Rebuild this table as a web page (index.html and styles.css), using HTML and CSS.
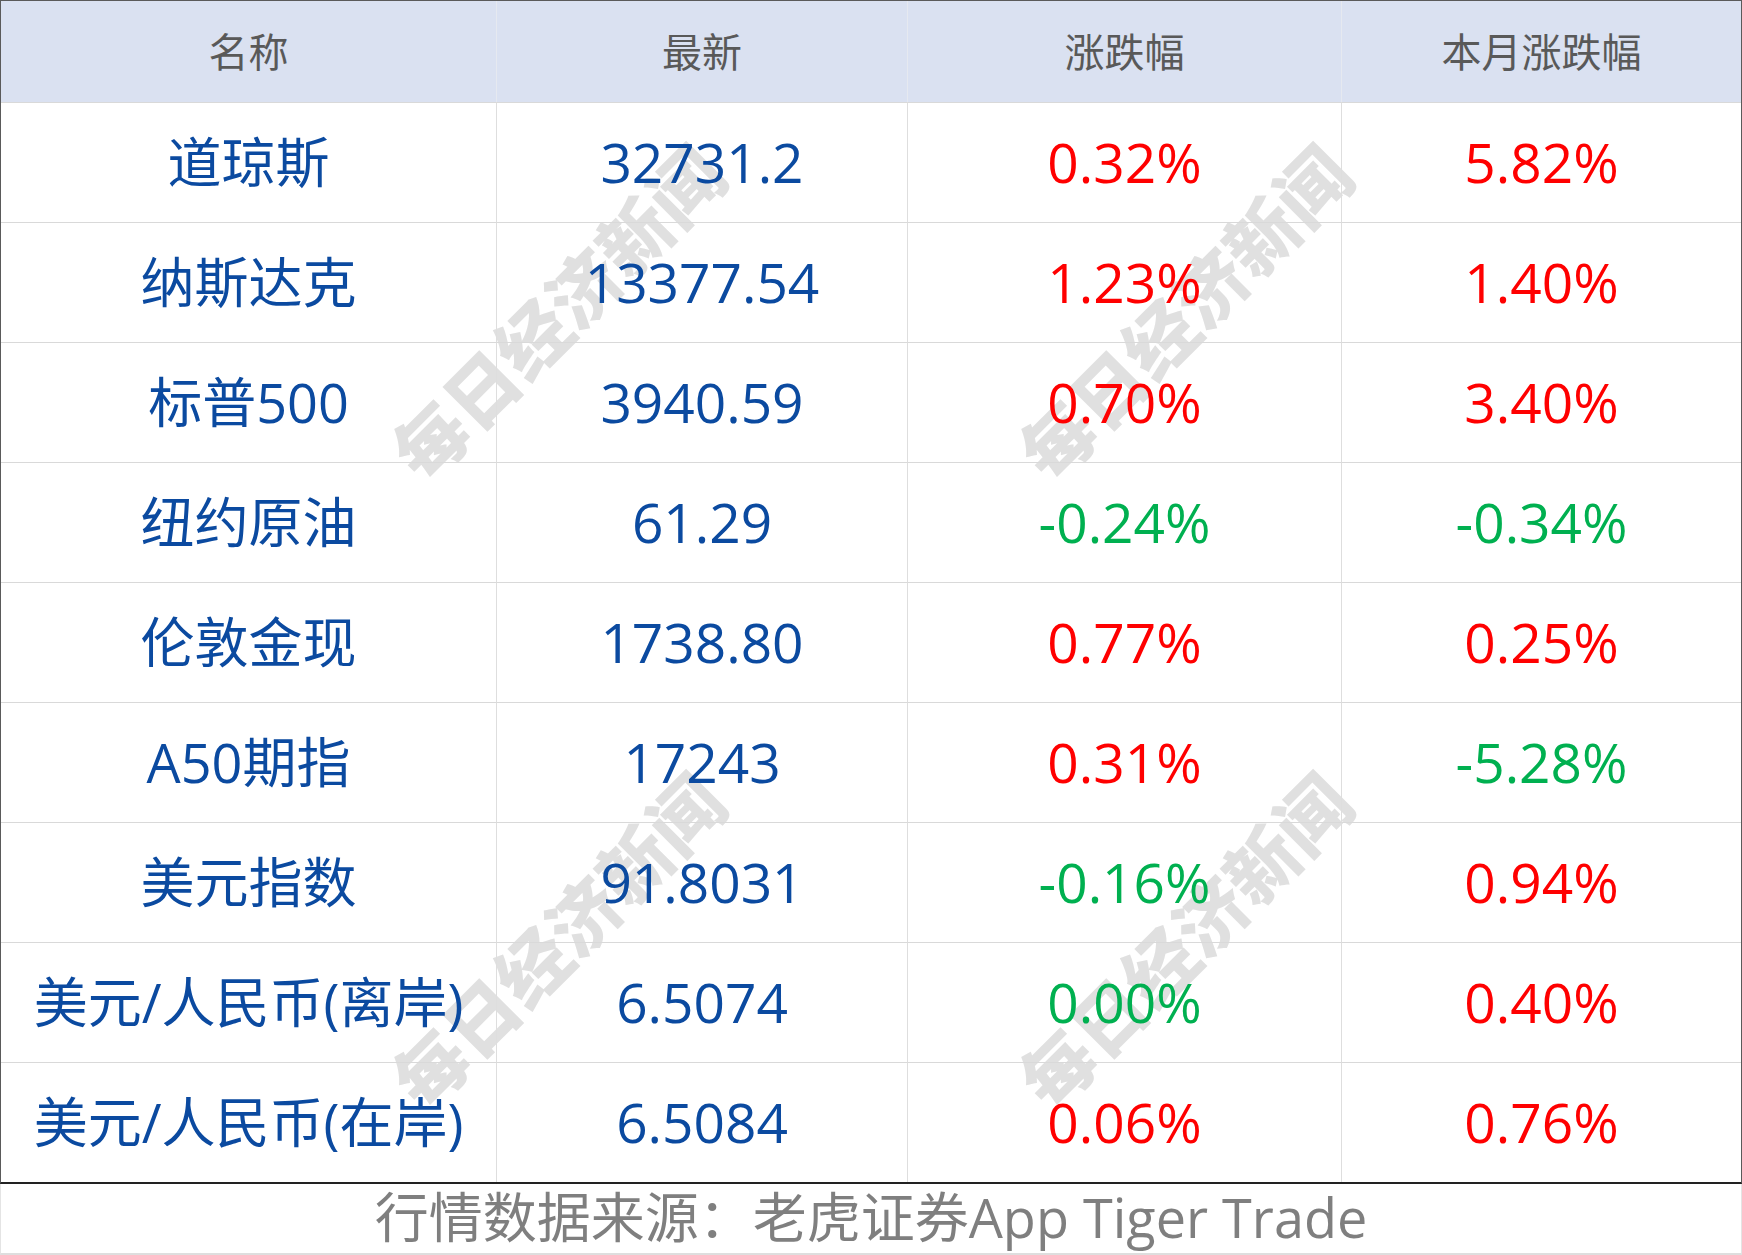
FILE: index.html
```html
<!DOCTYPE html>
<html lang="zh-CN">
<head>
<meta charset="utf-8">
<title>行情数据</title>
<link rel="stylesheet" href="styles.css">
</head>
<body>
<div class="sheet">
  <div class="marks">
    <span class="mark m1">每日经济新闻</span>
    <span class="mark m2">每日经济新闻</span>
    <span class="mark m3">每日经济新闻</span>
    <span class="mark m4">每日经济新闻</span>
  </div>
  <div class="grid">
    <div class="hd">名称</div><div class="hd">最新</div><div class="hd">涨跌幅</div><div class="hd">本月涨跌幅</div>

    <div class="c name">道琼斯</div><div class="c num">32731.2</div><div class="c up">0.32%</div><div class="c up">5.82%</div>
    <div class="c name">纳斯达克</div><div class="c num">13377.54</div><div class="c up">1.23%</div><div class="c up">1.40%</div>
    <div class="c name">标普500</div><div class="c num">3940.59</div><div class="c up">0.70%</div><div class="c up">3.40%</div>
    <div class="c name">纽约原油</div><div class="c num">61.29</div><div class="c down">-0.24%</div><div class="c down">-0.34%</div>
    <div class="c name">伦敦金现</div><div class="c num">1738.80</div><div class="c up">0.77%</div><div class="c up">0.25%</div>
    <div class="c name">A50期指</div><div class="c num">17243</div><div class="c up">0.31%</div><div class="c down">-5.28%</div>
    <div class="c name">美元指数</div><div class="c num">91.8031</div><div class="c down">-0.16%</div><div class="c up">0.94%</div>
    <div class="c name">美元/人民币(离岸)</div><div class="c num">6.5074</div><div class="c down">0.00%</div><div class="c up">0.40%</div>
    <div class="c name">美元/人民币(在岸)</div><div class="c num">6.5084</div><div class="c up">0.06%</div><div class="c up">0.76%</div>
  </div>
  <div class="foot"><span>行情数据来源：老虎证券App Tiger Trade</span></div>
</div>
</body>
</html>
```
FILE: styles.css
```css
html, body {
  margin: 0;
  padding: 0;
  background: #ffffff;
}
body {
  width: 1742px;
  height: 1255px;
  overflow: hidden;
  font-family: "Open Sans", "Noto Sans CJK SC", sans-serif;
}
.sheet {
  position: relative;
  width: 1742px;
}
.grid {
  position: relative;
  z-index: 1;
  display: grid;
  grid-template-columns: 495px 411px 434px 400px;
  grid-template-rows: 101px repeat(9, 120px);
  width: 1740px;
  border: 1px solid #5a5a5a;
  border-bottom: 2px solid #222222;
}
.hd {
  background: #dae1f1;
  color: #595959;
  font-size: 40px;
  line-height: 1;
  padding-bottom: 0;
  display: flex;
  align-items: center;
  justify-content: center;
  border-left: 1px solid #e6e9f0;
}
.hd:first-child { border-left: none; }
.c {
  display: flex;
  align-items: center;
  justify-content: center;
  font-size: 55px;
  line-height: 1;
  padding-bottom: 2px;
  border-top: 1px solid #d9d9d9;
  border-left: 1px solid #dedede;
  white-space: nowrap;
}
.name { border-left: none; color: #0b4aa0; font-size: 54px; }
.num { color: #0b4aa0; }
.up { color: #ff0000; }
.down { color: #00b050; }
.foot {
  height: 71px;
  display: flex;
  align-items: center;
  justify-content: center;
  border-left: 1px solid #e4e4e4;
  border-right: 1px solid #e4e4e4;
  border-bottom: 2px solid #dedede;
  color: #7f7f7f;
  font-size: 54px;
  line-height: 1;
  padding-bottom: 4px;
  box-sizing: border-box;
  white-space: nowrap;
}
.marks {
  position: absolute;
  inset: 0;
  z-index: 0;
  pointer-events: none;
}
.mark {
  position: absolute;
  width: 520px;
  height: 90px;
  margin-left: -260px;
  margin-top: -45px;
  text-align: center;
  line-height: 90px;
  font-family: "Noto Sans CJK SC", sans-serif;
  font-weight: 900;
  font-size: 72px;
  color: #e0e0e0;
  transform: rotate(-45deg);
  white-space: nowrap;
}
.m1 { left: 556px; top: 311px; }
.m2 { left: 1183px; top: 311px; }
.m3 { left: 556px; top: 939px; }
.m4 { left: 1183px; top: 939px; }
```
